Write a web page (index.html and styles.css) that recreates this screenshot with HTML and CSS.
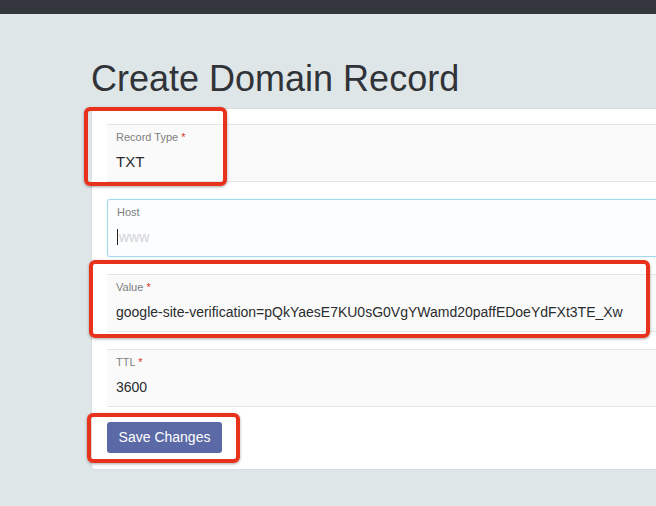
FILE: index.html
```html
<!DOCTYPE html>
<html>
<head>
<meta charset="utf-8">
<link rel="stylesheet" href="styles.css">
</head>
<body>
<div class="topbar"></div>
<main class="main">
  <h1 class="title">Create Domain Record</h1>
  <div class="card">
    <div class="fields">
      <div class="field">
        <div class="label">Record Type <span class="req">*</span></div>
        <div class="value select">TXT</div>
      </div>
      <div class="field focused">
        <div class="label">Host</div>
        <div class="value"><span class="caret"></span><span class="placeholder">www</span></div>
      </div>
      <div class="field">
        <div class="label">Value <span class="req">*</span></div>
        <div class="value">google-site-verification=pQkYaesE7KU0sG0VgYWamd20paffEDoeYdFXt3TE_Xw</div>
      </div>
      <div class="field">
        <div class="label">TTL <span class="req">*</span></div>
        <div class="value">3600</div>
      </div>
    </div>
    <button class="btn">Save Changes</button>
  </div>
</main>
<div class="mark mark-type"></div>
<div class="mark mark-value"></div>
<div class="mark mark-save"></div>
</body>
</html>
```
FILE: styles.css
```css
html, body {
  margin: 0;
  padding: 0;
  width: 656px;
  height: 506px;
  overflow: hidden;
  background: #dfe6e7;
  font-family: "Liberation Sans", Arial, sans-serif;
}
.topbar {
  height: 14px;
  background: #33373d;
}
.main {
  padding-left: 91px;
  overflow: hidden;
}
.title {
  margin: 45px 0 8.6px 0;
  font-size: 36px;
  line-height: 40px;
  font-weight: normal;
  color: #303338;
}
.card {
  width: 640px;
  background: #ffffff;
  border: 1px solid #d6dedf;
  border-right: none;
  border-radius: 4px 0 0 4px;
  padding: 15px 0 16px 15px;
  box-sizing: border-box;
}
.fields {
  display: flex;
  flex-direction: column;
  gap: 17px;
}
.field {
  height: 58px;
  box-sizing: border-box;
  background: #fafafa;
  border-top: 1px solid #e4e6e6;
  border-bottom: 1px solid #e4e6e6;
  padding: 6px 9px 0 9px;
}
.field.focused {
  border: 1px solid #a3d9ea;
  border-radius: 3px;
  background: #fcfdfe;
  box-shadow: 0 0 2px rgba(120, 200, 230, 0.4);
  padding-left: 9px;
}
.label {
  font-size: 11px;
  line-height: 13px;
  color: #7d7f80;
}
.req {
  color: #d9342b;
}
.value {
  margin-top: 8px;
  font-size: 14px;
  line-height: 20px;
  color: #2a2c2e;
  white-space: nowrap;
  display: flex;
  align-items: center;
}
.value.select {
  font-size: 15px;
}
.caret {
  display: inline-block;
  width: 1px;
  height: 16px;
  background: #222;
  margin-right: 1px;
}
.placeholder {
  color: #d2d4d6;
}
.btn {
  margin-top: 15px;
  height: 31px;
  width: 115px;
  padding: 0;
  background: #5b69a6;
  border: none;
  border-radius: 3px;
  color: #ffffff;
  font-family: "Liberation Sans", Arial, sans-serif;
  font-size: 14px;
  display: block;
}
.mark {
  position: absolute;
  box-sizing: border-box;
  border: 4px solid #e8321c;
  border-radius: 6px;
  box-shadow: 0 1px 3px rgba(0, 0, 0, 0.35);
}
.mark-type {
  left: 84px;
  top: 107px;
  width: 143px;
  height: 79px;
}
.mark-value {
  left: 89px;
  top: 260px;
  width: 561px;
  height: 78px;
}
.mark-save {
  left: 87px;
  top: 413px;
  width: 153px;
  height: 50px;
}
```
